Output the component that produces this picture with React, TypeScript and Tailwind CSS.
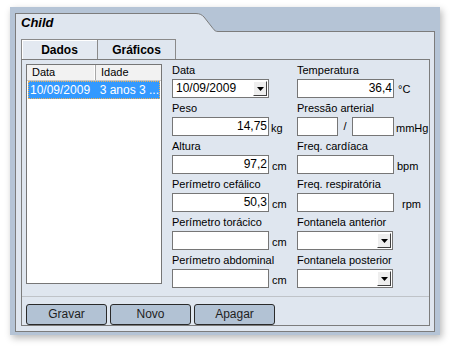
import React from "react";

function Caret() {
  return (
    <svg width="7" height="4" viewBox="0 0 7 4">
      <path d="M0 0H7L3.5 4Z" fill="#000" />
    </svg>
  );
}

function DropBtn() {
  return (
    <div className="w-[14px] h-full flex items-center justify-center bg-[#eeeeee] border-t border-l border-t-white border-l-white border-r border-b border-r-[#404040] border-b-[#404040]">
      <Caret />
    </div>
  );
}

function Combo({ value, w = "w-[97px]" }: { value?: string; w?: string }) {
  return (
    <div className={`${w} h-[19px] border border-[#767676] bg-white flex items-stretch p-[1px]`}>
      <div className="flex-1 pl-[2px] text-[12px] leading-[15px] text-black">{value}</div>
      <DropBtn />
    </div>
  );
}

function Input({ value, w = "w-[97px]" }: { value?: string; w?: string }) {
  return (
    <div className={`${w} h-[19px] border border-[#767676] bg-white text-right pr-[1px] text-[12px] leading-[17px] text-black`}>
      {value}
    </div>
  );
}

function Unit({ children, ml = "ml-[3px]" }: { children: React.ReactNode; ml?: string }) {
  return <span className={`self-end ${ml} mb-[1px] text-[11px] leading-[13px] text-black whitespace-nowrap`}>{children}</span>;
}

function Field({ label, children }: { label: string; children: React.ReactNode }) {
  return (
    <div className="flex flex-col">
      <div className="h-[13px] leading-[13px] text-[11px] text-black mb-[2px] whitespace-nowrap">{label}</div>
      <div className="flex h-[19px]">{children}</div>
    </div>
  );
}

export default function App() {
  return (
    <div className="w-[450px] h-[346px] bg-white pt-[7px] pl-[10px] font-['Liberation_Sans',Arial,sans-serif]">
      <div className="w-[430px] h-[328px] bg-[#b5c4d6] pt-[6px] pl-[5px] shadow-[2px_3px_7px_rgba(0,0,0,0.28)]">
        <div className="w-[420px] h-[317px] flex flex-col">
          {/* title row */}
          <div className="flex h-[19px]">
            <div className="w-[179px] border-l border-t border-[#7c7c7c] bg-[#dfe6ef] pl-[5px] pt-[1px] text-[13px] leading-[16px] font-bold italic text-black">
              Child
            </div>
            <svg width="24" height="19" viewBox="0 0 24 19" className="block">
              <path d="M0 0.5 H2 C6 0.5 8 2 10 4 L19 15.5 C20.5 17.5 21.5 18.5 24 18.5 V19 H0 Z" fill="#dfe6ef" />
              <path d="M0 0.5 H2 C6 0.5 8 2 10 4 L19 15.5 C20.5 17.5 21.5 18.5 24 18.5" fill="none" stroke="#7c7c7c" strokeWidth="1" />
            </svg>
            <div className="flex-1 border-b border-[#7c7c7c]" />
          </div>
          {/* body */}
          <div className="flex-1 border-l border-r border-b border-[#7c7c7c] bg-[#dfe6ef] pl-[5px] pr-[4px] pt-[7px] pb-[5px] flex flex-col">
            {/* tabs */}
            <div className="flex h-[20px]">
              <div className="w-[77px] border-l border-t border-r border-[#8a8a8a] shadow-[inset_1px_1px_0_#ffffff] bg-[#e3e9f1] flex items-center justify-center text-[12px] font-bold text-black">
                Dados
              </div>
              <div className="w-[78px] border-t border-r border-[#8a8a8a] bg-[#dfe6ef] flex items-center justify-center text-[12px] font-bold text-black">
                Gráficos
              </div>
            </div>
            {/* frame */}
            <div className="flex-1 border border-[#7c7c7c] flex flex-col">
              <div className="flex pt-[4px] pl-[4px]">
                {/* list */}
                <div className="w-[136px] h-[220px] border border-[#767676] bg-white flex flex-col">
                  <div className="flex h-[16px] bg-[#f2f2f2] border-b border-[#c8c8c8] text-[11px] leading-[15px] text-black">
                    <div className="w-[69px] border-r border-[#a8a8a8] pl-[5px] shadow-[inset_-1px_0_0_#ffffff]">Data</div>
                    <div className="flex-1 pl-[5px]">Idade</div>
                  </div>
                  <div className="flex h-[18px] ml-[1px] mr-[1px] bg-[#3399ff] border border-dotted border-[#f0b050] text-[12px] leading-[16px] text-white whitespace-nowrap overflow-hidden">
                    <div className="w-[74px] pl-[1px]">10/09/2009</div>
                    <div className="flex-1">3 anos 3 ...</div>
                  </div>
                </div>
                {/* col 1 */}
                <div className="ml-[10px] w-[125px] flex flex-col gap-[4px]">
                  <Field label="Data">
                    <Combo value="10/09/2009" />
                  </Field>
                  <Field label="Peso">
                    <Input value="14,75" />
                    <Unit ml="ml-[2px]">kg</Unit>
                  </Field>
                  <Field label="Altura">
                    <Input value="97,2" />
                    <Unit>cm</Unit>
                  </Field>
                  <Field label="Perímetro cefálico">
                    <Input value="50,3" />
                    <Unit>cm</Unit>
                  </Field>
                  <Field label="Perímetro torácico">
                    <Input />
                    <Unit>cm</Unit>
                  </Field>
                  <Field label="Perímetro abdominal">
                    <Input />
                    <Unit>cm</Unit>
                  </Field>
                </div>
                {/* col 2 */}
                <div className="flex flex-col gap-[4px]">
                  <Field label="Temperatura">
                    <Input value="36,4" />
                    <span className="self-center mt-[2px] ml-[4px] text-[11px] leading-[13px] text-black">°C</span>
                  </Field>
                  <Field label="Pressão arterial">
                    <Input w="w-[41px]" />
                    <span className="w-[14px] text-center self-center text-[11px] leading-[13px] text-black">/</span>
                    <Input w="w-[42px]" />
                    <Unit ml="ml-[2px]">mmHg</Unit>
                  </Field>
                  <Field label="Freq. cardíaca">
                    <Input />
                    <Unit>bpm</Unit>
                  </Field>
                  <Field label="Freq. respiratória">
                    <Input />
                    <Unit ml="ml-[8px]">rpm</Unit>
                  </Field>
                  <Field label="Fontanela anterior">
                    <Combo w="w-[96px]" />
                  </Field>
                  <Field label="Fontanela posterior">
                    <Combo w="w-[96px]" />
                  </Field>
                </div>
              </div>
              <div className="mt-[8px] h-px bg-[#bfc3c8]" />
              <div className="flex gap-[3px] pl-[4px] mt-[7px]">
                <button className="w-[81px] h-[21px] rounded-[3px] border border-[#2a2a2a] bg-[#b2c2d4] text-[12px] leading-[19px] text-[#1e1e1e]">Gravar</button>
                <button className="w-[81px] h-[21px] rounded-[3px] border border-[#2a2a2a] bg-[#b2c2d4] text-[12px] leading-[19px] text-[#1e1e1e]">Novo</button>
                <button className="w-[81px] h-[21px] rounded-[3px] border border-[#2a2a2a] bg-[#b2c2d4] text-[12px] leading-[19px] text-[#1e1e1e]">Apagar</button>
              </div>
            </div>
          </div>
        </div>
      </div>
    </div>
  );
}
